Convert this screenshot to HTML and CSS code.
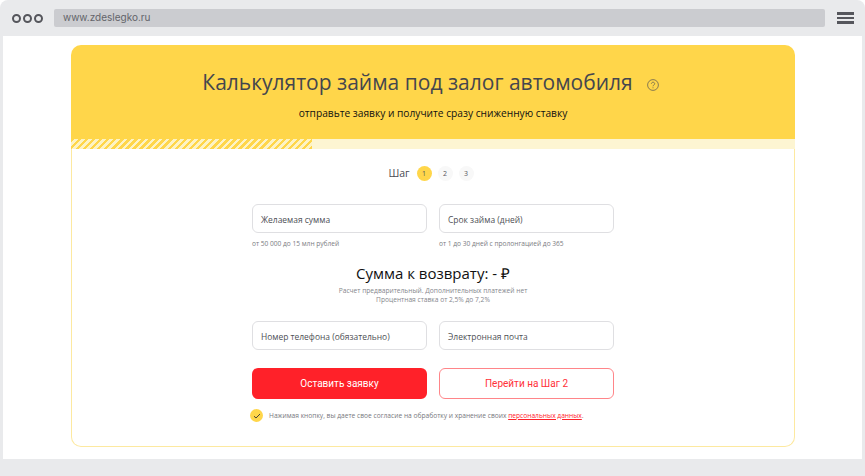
FILE: index.html
```html
<!DOCTYPE html>
<html lang="ru">
<head>
<meta charset="utf-8">
<title>Калькулятор займа</title>
<link rel="stylesheet" href="styles.css">
</head>
<body>
<div class="frame">
  <div class="bar">
    <div class="dots"><i></i><i></i><i></i></div>
    <div class="url">www.zdeslegko.ru</div>
    <div class="burger"><i></i><i></i><i></i></div>
  </div>
  <div class="page">
    <div class="card">
      <header class="head">
        <h1 class="title">Калькулятор займа под залог автомобиля<svg class="help" width="12" height="12" viewBox="0 0 12 12"><circle cx="6" cy="6" r="5.400" fill="none" stroke="#6b6350" stroke-width=".8"/><path d="M4.400 4.800c0-2.100 3.300-2.100 3.300 0 0 1.200-1.700 1.100-1.700 2.500" fill="none" stroke="#6b6350" stroke-width=".8"/><circle cx="6" cy="8.800" r=".5" fill="#6b6350"/></svg></h1>
        <p class="sub">отправьте заявку и получите сразу сниженную ставку</p>
      </header>
      <div class="progress"><div class="fill"></div></div>
      <div class="body">
        <div class="steps">
          <span class="steps-label">Шаг</span>
          <span class="step on">1</span><span class="step">2</span><span class="step">3</span>
        </div>
        <div class="grid first">
          <div><div class="input">Желаемая сумма</div><div class="hint">от 50 000 до 15 млн рублей</div></div>
          <div><div class="input">Срок займа (дней)</div><div class="hint">от 1 до 30 дней с пролонгацией до 365</div></div>
        </div>
        <div class="sum">Сумма к возврату: - ₽</div>
        <div class="note">Расчет предварительный. Дополнительных платежей нет<br>Процентная ставка от 2,5% до 7,2%</div>
        <div class="grid second">
          <div class="input">Номер телефона (обязательно)</div>
          <div class="input">Электронная почта</div>
        </div>
        <div class="grid third">
          <div class="btn solid">Оставить заявку</div>
          <div class="btn outline">Перейти на Шаг 2</div>
        </div>
        <div class="agree">
          <span class="check"><svg width="8" height="6" viewBox="0 0 8 6"><path d="M1 3.200 3 5 7 1" fill="none" stroke="#4a4636" stroke-width="1"/></svg></span>
          <span>Нажимая кнопку, вы даете свое согласие на обработку и хранение своих <a class="link">персональных данных</a>.</span>
        </div>
      </div>
    </div>
  </div>
</div>
</body>
</html>
```
FILE: styles.css
```css
* { box-sizing: border-box; }
html, body { margin: 0; padding: 0; }
body { width: 865px; height: 476px; background: #fff; font-family: "Open Sans", sans-serif; overflow: hidden; }
.frame { width: 865px; height: 476px; background: #e9eaec; border-radius: 8px 8px 0 0; padding-bottom: 17px; display: flex; flex-direction: column; }
.bar { height: 36px; flex: none; display: flex; align-items: flex-start; padding: 9px 0 0 12px; }
.dots { display: flex; flex: none; gap: 2px; margin-top: 5px; width: 42px; }
.dots i { width: 9px; height: 9px; border: 2px solid #55565c; border-radius: 50%; }
.url { flex: none; width: 771px; height: 18px; background: #cbccd0; border-radius: 2px; font: 10px/17px Inter, sans-serif; color: #63646a; padding-left: 9px; }
.burger { flex: none; margin-left: 12px; margin-top: 3px; width: 17px; display: flex; flex-direction: column; gap: 2px; }
.burger i { height: 2.500px; background: #55565c; }
.page { flex: 1; margin: 0 3px; background: #fff; padding: 9px 67px 12px 68px; }
.card { height: 402px; display: flex; flex-direction: column; }
.head { height: 94px; flex: none; background: #ffd64a; border-radius: 10px 10px 0 0; padding-top: 22px; text-align: center; }
.title { margin: 0 0 0 -5px; font-size: 21px; line-height: 30px; font-weight: 400; color: #44464e; }
.help { margin-left: 14px; vertical-align: -1px; }
.sub { margin: 8px 0 0; font-size: 10.200px; line-height: 16px; color: #111; }
.progress { height: 10px; flex: none; background: #fdf5d2; }
.fill { width: 241px; height: 100%; background: repeating-linear-gradient(135deg, #ffd64a 0 2.500px, #fdf3c4 2.500px 5px); }
.body { flex: 1; border: 1px solid #fde9a0; border-top: 0; border-radius: 0 0 10px 10px; padding-left: 180px; width: 724px; }
.steps { display: flex; align-items: center; justify-content: center; height: 16px; margin: 16px 0 0 -184px; font-size: 10.500px; color: #4a4b52; }
.steps-label { margin-right: 7px; }
.step { width: 15px; height: 15px; margin-right: 6px; border-radius: 50%; background: #f8f8f8; font-size: 7px; line-height: 15px; text-align: center; color: #55565c; }
.step:last-child { margin-right: 0; }
.step.on { background: #ffd64a; }
.grid { display: grid; grid-template-columns: 175px 175px; column-gap: 12px; }
.first { margin-top: 23px; }
.input { height: 29px; border: 1px solid #dfdfe2; border-radius: 6px; padding-left: 8px; font-size: 8.450px; line-height: 29px; color: #4e4f55; }
.hint { margin-top: 6px; font-size: 6.600px; line-height: 9px; color: #7b7c82; }
.sum { margin: 15px 0 0 0; width: 362px; text-align: center; font-size: 15px; line-height: 21px; color: #111; }
.note { width: 362px; margin-top: 2px; text-align: center; font-size: 6.650px; line-height: 9px; color: #85868c; }
.second { margin-top: 17px; }
.third { margin-top: 18px; }
.btn { height: 31px; border-radius: 6px; font: 10px/32px Roboto, sans-serif; text-align: center; }
.solid { background: #ff2129; color: #fff; }
.outline { border: 1px solid #ff8589; color: #ff3038; line-height: 30px; }
.agree { display: flex; align-items: center; margin: 10px 0 0 -2px; font-size: 6.650px; line-height: 10px; color: #77787e; }
.check { width: 13px; height: 13px; margin-right: 6px; border-radius: 50%; background: #ffd64a; display: flex; align-items: center; justify-content: center; }
.link { color: #ff2129; text-decoration: underline; }
```
